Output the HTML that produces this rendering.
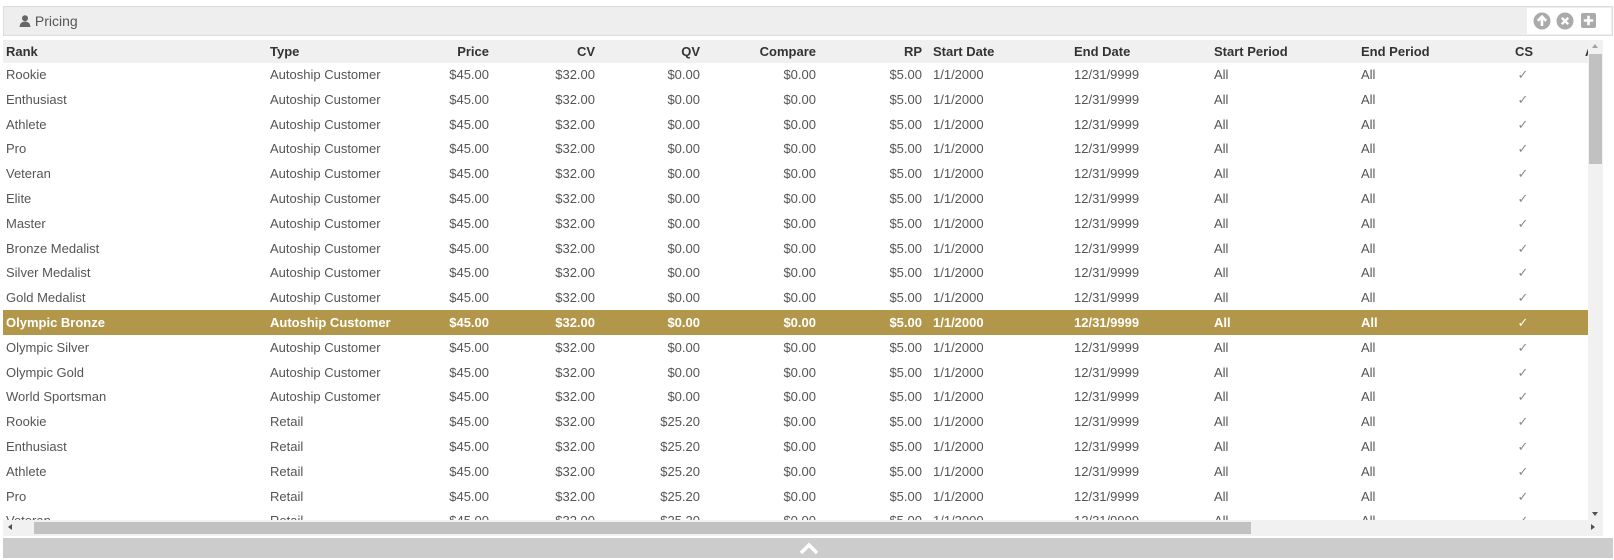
<!DOCTYPE html>
<html><head><style>
body{margin:0;width:1614px;height:560px;background:#fff;font-family:"Liberation Sans",Arial,sans-serif;font-size:13px;overflow:hidden;position:relative}
.hdr{position:absolute;left:3px;top:6px;width:1608px;height:28px;background:#eee;border:1px solid #ddd}
.hdr .t{position:absolute;left:15px;top:6px;color:#555;font-size:14px}
.icons{position:absolute;left:1527px;top:8px;width:84px;height:26px;background:#fff}
.tbl{position:absolute;left:3px;top:40px;width:1585px;height:480px;overflow:hidden}
.row{position:absolute;left:0;width:1585px;height:25px;color:#555}
.row span{position:absolute;top:5px;white-space:nowrap}
.th{background:#f0f0f0;color:#333;font-weight:bold;height:23px}
.th span{top:4px}
.hl{background:#b2964a;color:#fff;font-weight:bold}
.ck{color:#8a8a8a;font-weight:normal}
.hl .ck{color:#fff}
</style></head><body>
<div class="hdr"><span class="t"><svg width="12" height="12" viewBox="0 0 12 12" style="vertical-align:-1px"><circle cx="6" cy="3.3" r="3" fill="#666"/><path d="M0.5 12 Q1 6.5 6 6.5 Q11 6.5 11.5 12Z" fill="#666"/></svg> Pricing</span></div>
<div class="icons">
<svg width="84" height="26" viewBox="0 0 84 26">
<circle cx="15" cy="13" r="8.5" fill="#aaa"/><path d="M15 18V9M10.8 12.8L15 8.6 19.2 12.8" stroke="#fff" stroke-width="2.6" fill="none"/>
<circle cx="38" cy="13" r="8.5" fill="#aaa"/><path d="M34.8 9.8L41.2 16.2M41.2 9.8L34.8 16.2" stroke="#fff" stroke-width="2.4"/>
<rect x="54" y="5" width="15" height="15" rx="2" fill="#aaa"/><path d="M61.5 7.8V17.2M56.8 12.5H66.2" stroke="#fff" stroke-width="2.6"/>
</svg></div>
<div class="tbl" id="t"></div>
<div style="position:absolute;left:1588px;top:40px;width:15px;height:480px;background:#f1f1f1"><div style="position:absolute;left:1px;top:14px;width:13px;height:110px;background:#c1c1c1"></div><div style="position:absolute;left:4px;top:4px;border:3.5px solid transparent;border-bottom:4px solid #a3a3a3;border-top:0"></div><div style="position:absolute;left:4px;bottom:4px;border:3.5px solid transparent;border-top:4px solid #505050;border-bottom:0"></div></div>
<div style="position:absolute;left:3px;top:520px;width:1600px;height:16px;background:#f1f1f1"><div style="position:absolute;left:31px;top:2px;width:1217px;height:12px;background:#c1c1c1"></div><div style="position:absolute;left:5px;top:4px;border:3.5px solid transparent;border-right:4px solid #505050;border-left:0"></div><div style="position:absolute;right:8px;top:4px;border:3.5px solid transparent;border-left:4px solid #505050;border-right:0"></div></div>
<div style="position:absolute;left:3px;top:538px;width:1610px;height:20px;background:#ccc"><svg width="20" height="14" viewBox="0 0 20 14" style="position:absolute;left:796px;top:3px"><path d="M2 12L10 4 18 12" stroke="#fff" stroke-width="3.5" fill="none"/></svg></div>
<script>
var cols=[[3,'l'],[267,'l'],[486,'r'],[592,'r'],[697,'r'],[813,'r'],[919,'r'],[930,'l'],[1071,'l'],[1211,'l'],[1358,'l'],[1520,'c'],[1582,'l']];
var hd=['Rank','Type','Price','CV','QV','Compare','RP','Start Date','End Date','Start Period','End Period','CS','Active'];
var ranks=['Rookie','Enthusiast','Athlete','Pro','Veteran','Elite','Master','Bronze Medalist','Silver Medalist','Gold Medalist','Olympic Bronze','Olympic Silver','Olympic Gold','World Sportsman'];
var rows=[];ranks.forEach(function(r){rows.push([r,'Autoship Customer','$0.00'])});
['Rookie','Enthusiast','Athlete','Pro','Veteran'].forEach(function(r){rows.push([r,'Retail','$25.20'])});
function mk(vals,top,cls){var h='<div class="row '+cls+'" style="top:'+top+'px">';vals.forEach(function(v,i){var c=cols[i],s;if(c[1]=='r')s='right:'+(1585-c[0])+'px';else if(c[1]=='c')s='left:'+(c[0]-8)+'px;width:16px;text-align:center';else s='left:'+c[0]+'px';h+='<span '+(i==11&&cls!='th'?'class="ck" ':'')+'style="'+s+'">'+v+'</span>'});return h+'</div>';}
var html=mk(hd,0,'th');
rows.forEach(function(r,i){html+=mk([r[0],r[1],'$45.00','$32.00',r[2],'$0.00','$5.00','1/1/2000','12/31/9999','All','All','&#10003;',''],Math.round(22+24.8*i),i==10?'hl':'')});
document.getElementById('t').innerHTML=html;
</script>
</body></html>
